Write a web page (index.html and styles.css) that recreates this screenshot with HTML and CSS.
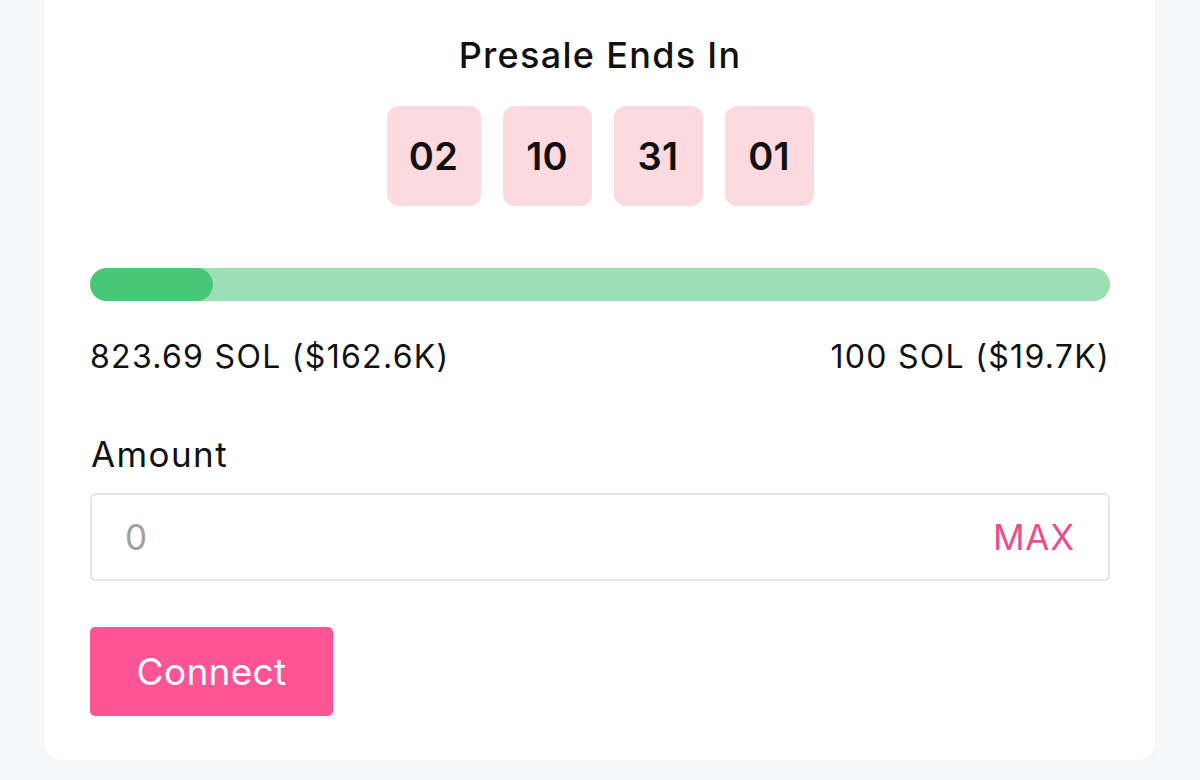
FILE: index.html
```html
<!DOCTYPE html>
<html>
<head>
<meta charset="utf-8">
<link rel="stylesheet" href="styles.css">
</head>
<body>
<div class="card">
  <h2 class="title">Presale Ends In</h2>
  <div class="countdown">
    <div class="cell c1">02</div>
    <div class="cell">10</div>
    <div class="cell">31</div>
    <div class="cell">01</div>
  </div>
  <div class="progress"><div class="fill" style="width:12.1%"></div></div>
  <div class="stats">
    <span>823.69 SOL ($162.6K)</span>
    <span>100 SOL ($19.7K)</span>
  </div>
  <label class="label">Amount</label>
  <div class="input">
    <span class="placeholder">0</span>
    <span class="max">MAX</span>
  </div>
  <button class="btn">Connect</button>
</div>
</body>
</html>
```
FILE: styles.css
```css
html, body {
  margin: 0;
  padding: 0;
  background: #f7f8fa;
  font-family: Inter, "Noto Sans", sans-serif;
  color: #111;
}
.card {
  width: 1111px;
  margin-left: 44px;
  box-sizing: border-box;
  background: #fff;
  border-radius: 0 0 16px 16px;
  box-shadow: 0 1px 3px rgba(0,0,0,0.05);
  padding: 34px 45px 44px 46px;
  display: flex;
  flex-direction: column;
}
.title {
  margin: 0;
  text-align: center;
  font-size: 36px;
  font-weight: 500;
  line-height: 42px;
  letter-spacing: 1.3px;
}
.countdown {
  margin-top: 30px;
  display: flex;
  justify-content: center;
  gap: 22px;
}
.cell {
  width: 89px;
  height: 100px;
  border-radius: 12px;
  background: #fdd9e0;
  display: flex;
  align-items: center;
  justify-content: center;
  font-size: 38px;
  font-weight: 600;
  letter-spacing: 0.3px;
}
.cell.c1 { width: 94px; }
.progress {
  margin-top: 62px;
  height: 33px;
  border-radius: 17px;
  background: #9ddfb5;
  overflow: hidden;
}
.fill {
  height: 100%;
  border-radius: 17px;
  background: #48c774;
}
.stats {
  margin-top: 38px;
  display: flex;
  justify-content: space-between;
  font-size: 32px;
  line-height: 36px;
  letter-spacing: 1.3px;
}
.label {
  margin-top: 59px;
  font-size: 35px;
  line-height: 40px;
  padding-left: 1px;
  letter-spacing: 1.4px;
}
.input {
  margin-top: 19px;
  height: 88px;
  box-sizing: border-box;
  border: 2px solid #e5e5e7;
  border-radius: 6px;
  display: flex;
  align-items: center;
  justify-content: space-between;
  padding: 0 34px 0 33px;
  font-size: 35px;
}
.placeholder { color: #a0a0a3; }
.max { color: #ea4f8a; letter-spacing: 0.8px; margin-right: -1px; }
.btn {
  margin-top: 46px;
  align-self: flex-start;
  width: 243px;
  height: 89px;
  border: none;
  border-radius: 5px;
  background: #fd5495;
  color: #fff;
  font-family: Inter, "Noto Sans", sans-serif;
  font-size: 37px;
  font-weight: 400;
  letter-spacing: 0.3px;
  padding: 0;
}
```
